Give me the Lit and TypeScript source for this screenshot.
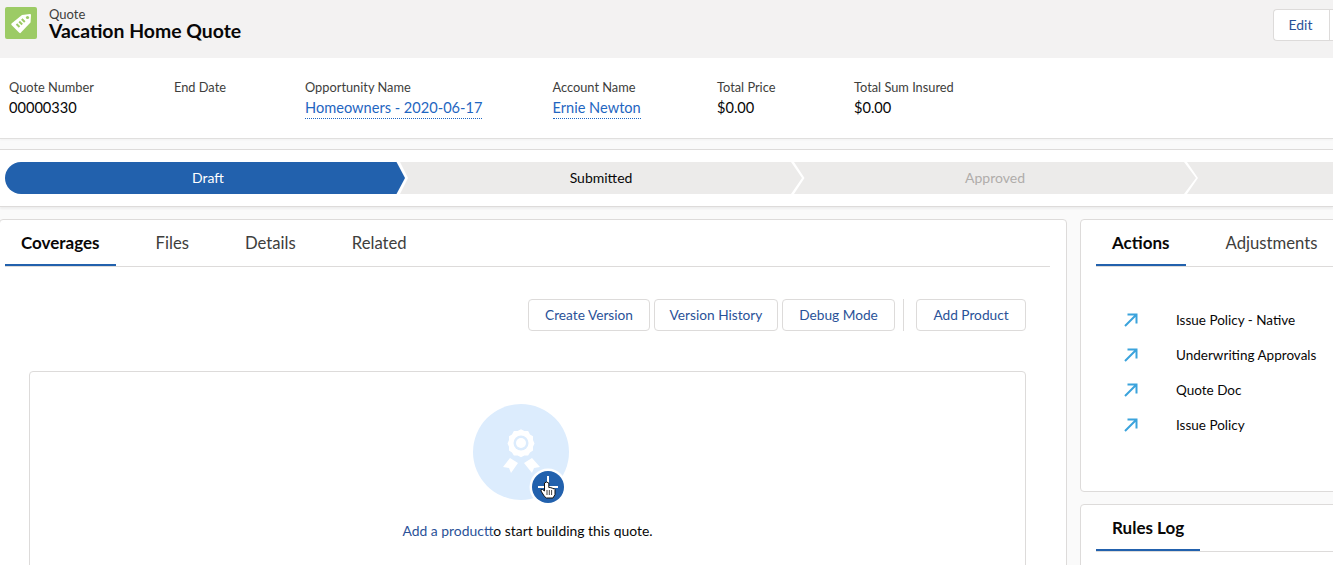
import {LitElement, html, css, svg} from 'lit';
import {customElement} from 'lit/decorators.js';

const fields = [
  {label: 'Quote Number', value: '00000330', link: false},
  {label: 'End Date', value: '', link: false},
  {label: 'Opportunity Name', value: 'Homeowners - 2020-06-17', link: true},
  {label: 'Account Name', value: 'Ernie Newton', link: true},
  {label: 'Total Price', value: '$0.00', link: false},
  {label: 'Total Sum Insured', value: '$0.00', link: false},
];

const actions = [
  'Issue Policy - Native',
  'Underwriting Approvals',
  'Quote Doc',
  'Issue Policy',
];

const arrow = svg`<path d="M2 14 L13 3 M4.5 2.5 H13.5 V11.5" fill="none" stroke="#3ba3dc" stroke-width="2"/>`;

@customElement('app-root')
export class AppRoot extends LitElement {
  static override styles = css`
    :host {
      display: block;
      width: 1333px;
      height: 565px;
      overflow: hidden;
      background: #fafafa;
      font-family: 'Lato', 'Noto Sans', sans-serif;
      font-size: 14px;
      color: #080707;
    }

    .header {
      height: 58px;
      background: #f3f2f2;
      display: flex;
      align-items: flex-start;
      justify-content: space-between;
      box-sizing: border-box;
      padding: 7px 0 0 5px;
    }

    .title-wrap {
      display: flex;
      gap: 12px;
    }

    .record-icon {
      width: 32px;
      height: 32px;
      border-radius: 2px;
      background: #9ccb65;
      display: block;
    }

    .kicker {
      font-size: 13px;
      line-height: 14px;
      color: #3e3e3c;
    }

    .title {
      font-size: 19.4px;
      line-height: 20px;
      font-weight: 700;
      color: #080707;
    }

    .edit {
      width: 60px;
      height: 32px;
      margin-top: 2px;
      box-sizing: border-box;
      border: 1px solid #dddbda;
      border-right: none;
      border-radius: 4px 0 0 4px;
      background: #fff;
      color: #2a5298;
      font: inherit;
      font-size: 13.9px;
      padding: 0 6px 2px 0;
      text-align: center;
      position: relative;
    }

    .edit::after {
      content: '';
      position: absolute;
      top: 0;
      right: 3px;
      width: 1px;
      height: 30px;
      background: #dddbda;
    }

    .highlights {
      background: #fff;
      border-bottom: 1px solid #e0dfde;
      box-shadow: 0 1px 2px rgba(0, 0, 0, 0.04);
      display: grid;
      grid-template-columns: 165px 131px 247.5px 164.5px 137px 1fr;
      padding-left: 9px;
      padding-top: 21px;
      height: 59px;
    }

    .field-label {
      font-size: 12.8px;
      line-height: 16px;
      color: #3e3e3c;
    }

    .field-value {
      font-size: 14.6px;
      line-height: 20px;
      margin-top: 3px;
    }

    .field-value a {
      color: #1f66c1;
      text-decoration: none;
      border-bottom: 1px dotted #1f66c1;
      padding-bottom: 2px;
    }

    .path {
      margin-top: 10px;
      height: 58px;
      background: #fff;
      border-top: 1px solid #dddbda;
      border-bottom: 1px solid #dddbda;
      box-shadow: 0 2px 2px rgba(0, 0, 0, 0.05);
      box-sizing: border-box;
      display: flex;
      align-items: flex-start;
      padding: 12px 0 0 5px;
    }

    .step {
      flex: none;
      width: 402px;
      height: 32px;
      box-sizing: border-box;
      padding-bottom: 1px;
      background: #ecebea;
      display: flex;
      align-items: center;
      justify-content: center;
    }

    .step.draft {
      width: 400px;
      padding-left: 6px;
      background: #2261ad;
      color: #fff;
      border-radius: 16px 0 0 16px;
      clip-path: polygon(
        0 0,
        calc(100% - 8.5px) 0,
        100% 50%,
        calc(100% - 8.5px) 100%,
        0 100%
      );
    }

    .step.submitted {
      margin-left: -5px;
      clip-path: polygon(
        0 0,
        calc(100% - 11px) 0,
        100% 50%,
        calc(100% - 11px) 100%,
        0 100%,
        8px 50%
      );
    }

    .step.approved {
      margin-left: -8px;
      color: #b0adab;
      clip-path: polygon(
        0 0,
        calc(100% - 12px) 0,
        100% 50%,
        calc(100% - 12px) 100%,
        0 100%,
        10.5px 50%
      );
    }

    .step.rest {
      margin-left: -9px;
      width: 200px;
      clip-path: polygon(0 0, 100% 0, 100% 100%, 0 100%, 11px 50%);
    }

    .main {
      display: flex;
      gap: 13px;
      margin-top: 12px;
      margin-left: -1px;
    }

    .card {
      background: #fff;
      border: 1px solid #dddbda;
      border-radius: 4px;
      box-sizing: border-box;
    }

    .left {
      width: 1068px;
      height: 400px;
      flex: none;
      padding: 0 16px 0 5px;
    }

    .right {
      width: 280px;
      flex: none;
      display: flex;
      flex-direction: column;
      gap: 12px;
    }

    .actions {
      height: 273px;
      padding-left: 15px;
    }

    .rules {
      height: 100px;
      padding-left: 15px;
    }

    .tabs {
      display: flex;
      gap: 24px;
      height: 46px;
      border-bottom: 1px solid #dddbda;
    }

    .tab {
      height: 46px;
      box-sizing: border-box;
      padding: 0 16px;
      font-size: 16.7px;
      line-height: 46px;
      color: #3e3e3c;
      white-space: nowrap;
    }

    .tab.active {
      font-size: 17px;
      font-weight: 700;
      color: #080707;
      border-bottom: 2px solid #2261ad;
    }

    .toolbar {
      display: flex;
      justify-content: flex-end;
      gap: 4px;
      margin-top: 32px;
      padding-right: 24px;
    }

    .btn {
      height: 32px;
      box-sizing: border-box;
      border: 1px solid #dddbda;
      border-radius: 4px;
      background: #fff;
      color: #2a5298;
      font: inherit;
      font-size: 13.7px;
      padding: 0 0 2px;
    }

    .btn.create {
      width: 122px;
    }

    .btn.history {
      width: 124px;
    }

    .btn.debug {
      width: 113px;
    }

    .btn.add {
      width: 110px;
    }

    .sep {
      width: 1px;
      height: 32px;
      background: #dddbda;
      margin: 0 8px 0 4px;
    }

    .empty {
      margin: 40px 24px 0 24px;
      height: 220px;
      border: 1px solid #dddbda;
      border-radius: 4px;
      display: flex;
      flex-direction: column;
      align-items: center;
      padding-top: 32px;
      box-sizing: border-box;
    }

    .art {
      width: 112px;
      height: 112px;
      display: block;
      margin-left: 2px;
    }

    .empty p {
      margin: 5px 0 0;
      font-size: 13.9px;
      line-height: 20px;
    }

    .empty a {
      color: #2a5298;
      text-decoration: none;
    }

    .list {
      margin-top: 35px;
      display: flex;
      flex-direction: column;
    }

    .row {
      height: 35px;
      display: flex;
      align-items: center;
      padding-left: 27px;
      gap: 37px;
      white-space: nowrap;
      font-size: 13.5px;
    }

    .row svg {
      width: 16px;
      height: 16px;
      flex: none;
    }
  `;

  override render() {
    return html`
      <div class="header">
        <div class="title-wrap">
          <svg class="record-icon" viewBox="0 0 32 32">
            <path
              d="M17 8 L25 7 Q26 7 26 8 L25.5 15.5 L15.5 26 Q15 26.5 14 25.5 L6.5 18 Q6 17 6.5 16.5 Z"
              fill="#fff"
            />
            <circle cx="22.5" cy="10.5" r="1.6" fill="#9ccb65" />
            <path
              d="M11.5 17 L14.5 20 M14.2 14.5 L17.2 17.5 M16.8 12 L19.8 15"
              stroke="#9ccb65"
              stroke-width="2"
              fill="none"
            />
          </svg>
          <div>
            <div class="kicker">Quote</div>
            <div class="title">Vacation Home Quote</div>
          </div>
        </div>
        <button class="edit">Edit</button>
      </div>

      <div class="highlights">
        ${fields.map(
          (f) => html`
            <div>
              <div class="field-label">${f.label}</div>
              <div class="field-value">
                ${f.link ? html`<a>${f.value}</a>` : f.value}
              </div>
            </div>
          `
        )}
      </div>

      <div class="path">
        <div class="step draft">Draft</div>
        <div class="step submitted">Submitted</div>
        <div class="step approved">Approved</div>
        <div class="step rest"></div>
      </div>

      <div class="main">
        <div class="card left">
          <div class="tabs">
            <div class="tab active">Coverages</div>
            <div class="tab">Files</div>
            <div class="tab">Details</div>
            <div class="tab">Related</div>
          </div>
          <div class="toolbar">
            <button class="btn create">Create Version</button>
            <button class="btn history">Version History</button>
            <button class="btn debug">Debug Mode</button>
            <div class="sep"></div>
            <button class="btn add">Add Product</button>
          </div>
          <div class="empty">
            <svg class="art" viewBox="0 0 112 112">
              <circle cx="48" cy="48" r="48" fill="#dcecfd" />
              <polygon
                points="48,27.5 52.5,30 57.5,30 60,34.5 64,37 64,42 66,46.5 64,51 64,56 60,58.5 57.5,62.5 52.5,62.5 48,65 43.5,62.5 38.5,62.5 36,58.5 32,56 32,51 30,46.5 32,42 32,37 36,34.5 38.5,30 43.5,30"
                fill="#fff"
                transform="translate(48 39) scale(0.75) translate(-48 -46)"
              />
              <circle cx="48" cy="39" r="7.5" fill="#dcecfd" />
              <circle cx="48" cy="39" r="5" fill="#fff" />
              <polygon points="30,63 37,54 45,59 38,69 36,64" fill="#fff" />
              <polygon points="51,59 59,54 67,63 61,64 59,69" fill="#fff" />
              <circle cx="75" cy="83" r="18.5" fill="#fff" />
              <circle cx="75" cy="83" r="16" fill="#2261ad" />
              <path d="M75 72 V86 M65 83 H85" stroke="#fff" stroke-width="2" />
              <path
                d="M71.5 79 V87 L69.5 85.5 Q67.5 85 68 87 L71.5 92.5 L73.5 94 H80 L82 90.5 V85.5 Q81.5 84 80 84.8 Q79.5 83.3 78 84 Q77.4 83 75.8 83.5 L75.8 79 Q73.5 77 71.5 79 Z"
                fill="#fff"
                stroke="#111"
                stroke-width="1"
              />
              <path
                d="M74 86 V91 M76.3 86 V91 M78.6 86 V91"
                stroke="#111"
                stroke-width="0.8"
              />
            </svg>
            <p><a>Add a product</a>to start building this quote.</p>
          </div>
        </div>

        <div class="right">
          <div class="card actions">
            <div class="tabs">
              <div class="tab active">Actions</div>
              <div class="tab">Adjustments</div>
            </div>
            <div class="list">
              ${actions.map(
                (a) => html`
                  <div class="row">
                    <svg viewBox="0 0 16 16">${arrow}</svg>
                    <span>${a}</span>
                  </div>
                `
              )}
            </div>
          </div>
          <div class="card rules">
            <div class="tabs">
              <div class="tab active">Rules Log</div>
            </div>
          </div>
        </div>
      </div>
    `;
  }
}

declare global {
  interface HTMLElementTagNameMap {
    'app-root': AppRoot;
  }
}
